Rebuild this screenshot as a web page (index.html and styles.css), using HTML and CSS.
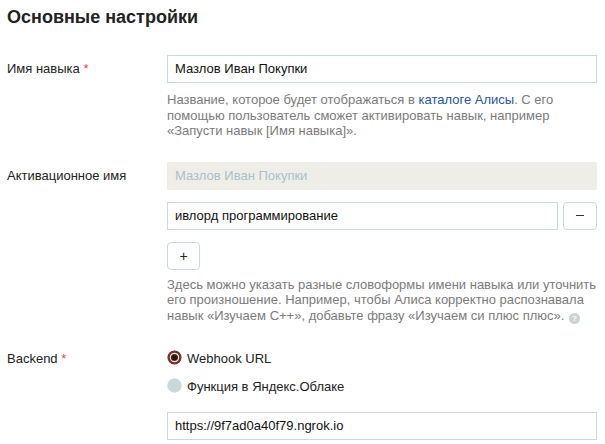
FILE: index.html
```html
<!DOCTYPE html>
<html lang="ru">
<head>
<meta charset="utf-8">
<title>Основные настройки</title>
<link rel="stylesheet" href="styles.css">
</head>
<body>
<div class="page">
  <h1 class="title">Основные настройки</h1>

  <div class="row row-name">
    <div class="label">Имя навыка <span class="req">*</span></div>
    <div class="field">
      <div class="input">Мазлов Иван Покупки</div>
      <p class="help help-name">Название, которое будет отображаться в <span class="link">каталоге Алисы</span>. С его помощью пользователь сможет активировать навык, например «Запусти навык [Имя навыка]».</p>
    </div>
  </div>

  <div class="row row-act">
    <div class="label">Активационное имя</div>
    <div class="field">
      <div class="input input-disabled">Мазлов Иван Покупки</div>
      <div class="input-line">
        <div class="input input-grow">ивлорд программирование</div>
        <div class="btn btn-minus"><span class="minus"></span></div>
      </div>
      <div class="btn btn-plus">+</div>
      <p class="help help-act">Здесь можно указать разные словоформы имени навыка или уточнить его произношение. Например, чтобы Алиса корректно распознавала навык «Изучаем С++», добавьте фразу «Изучаем си плюс плюс». <span class="q">?</span></p>
    </div>
  </div>

  <div class="row row-backend">
    <div class="label">Backend <span class="req">*</span></div>
    <div class="field">
      <div class="radio-line">
        <svg class="radio" width="15" height="15" viewBox="0 0 15 15"><circle cx="7.5" cy="7.5" r="7" fill="#5e2a20"/><circle cx="7.5" cy="7.5" r="6.2" fill="none" stroke="#8a3a2a" stroke-width="0.8"/><circle cx="7.5" cy="7.5" r="4.2" fill="none" stroke="#f2e4e0" stroke-width="1.2"/><circle cx="7.5" cy="7.5" r="2.7" fill="#2a1410"/></svg>
        <span>Webhook URL</span>
      </div>
      <div class="radio-line">
        <svg class="radio" width="15" height="15" viewBox="0 0 15 15"><circle cx="7.5" cy="7.5" r="7.2" fill="#c9d8d8"/></svg>
        <span>Функция в Яндекс.Облаке</span>
      </div>
      <div class="input input-url">https://9f7ad0a40f79.ngrok.io</div>
    </div>
  </div>
</div>
</body>
</html>
```

FILE: styles.css
```css
* { box-sizing: border-box; }
html, body { margin: 0; padding: 0; background: #fff; }
body {
  font-family: "Liberation Sans", Arial, sans-serif;
  font-size: 13px;
  color: #222;
}
.page { padding: 6px 7px 0 7px; width: 605px; }
.title {
  margin: 0;
  font-size: 18px;
  line-height: 22px;
  font-weight: bold;
  color: #222;
}
.row { display: flex; }
.row-name { margin-top: 27px; }
.row-act { margin-top: 23px; }
.row-backend { margin-top: 21px; }
.label { width: 160px; flex: none; line-height: 28px; color: #222; }
.req { color: #e04b3a; }
.field { width: 430px; flex: none; }
.input {
  height: 28px;
  border: 1px solid #c8d9db;
  padding: 0 7px;
  line-height: 26px;
  color: #111;
  background: #fff;
  white-space: nowrap;
}
.input-disabled { background: #efeee6; border-color: #efeee6; color: #a9c1cc; }
.input-line { display: flex; gap: 5px; margin-top: 12px; }
.input-grow { flex: 1; }
.btn {
  height: 28px;
  border: 1px solid #c8d9db;
  border-radius: 4px;
  background: #fff;
  display: flex;
  align-items: center;
  justify-content: center;
  color: #222;
}
.btn-minus { width: 34px; flex: none; }
.minus { width: 8px; height: 1px; background: #333; display: block; }
.btn-plus { width: 33px; margin-top: 12px; font-size: 14px; }
.help {
  margin: 0;
  width: 436px;
  font-size: 13px;
  line-height: 15.5px;
  color: #7b7b7b;
}
.help-name { margin-top: 9px; }
.help-act { margin-top: 7px; }
.link { color: #2a55a5; }
.q {
  display: inline-block;
  width: 11px;
  height: 11px;
  border-radius: 50%;
  background: #c9d4d4;
  color: #fff;
  font-size: 8px;
  line-height: 11px;
  text-align: center;
  font-weight: bold;
  vertical-align: -1px;
  margin-left: 1px;
}
.radio-line { display: flex; align-items: center; height: 28px; gap: 5px; color: #222; }
.radio { flex: none; display: block; margin-top: -2px; }
.input-url { margin-top: 11px; }
```
